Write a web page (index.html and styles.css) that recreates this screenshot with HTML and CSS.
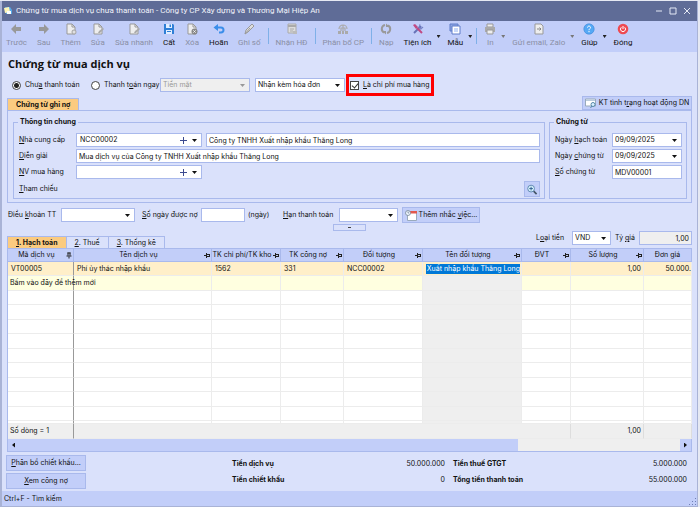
FILE: index.html
```
<!DOCTYPE html>
<html lang="vi">
<head>
<meta charset="UTF-8">
<meta name="viewport" content="width=device-width, initial-scale=1.0">
<title>Chứng từ mua dịch vụ</title>
<link rel="stylesheet" href="styles.css">
</head>
<body>
<div class="window">

<header class="titlebar">
  <svg class="app-icon" viewBox="0 0 8 8"><path d="M1 0h5l2 3v4H2z" fill="#58a9e8"/><path d="M0 1l5-1 1 5-5 1z" fill="#fff6b8"/><path d="M3 4h4v3H3z" fill="#fff"/></svg>
  <span class="caption">Chứng từ mua dịch vụ chưa thanh toán - Công ty CP Xây dựng và Thương Mại Hiệp An</span>
  <button class="win-btn" aria-label="Thu nhỏ"><svg viewBox="0 0 8 8"><path d="M1 4h6"/></svg></button>
  <button class="win-btn" aria-label="Phóng to"><svg viewBox="0 0 8 8"><path d="M1 1h6v6H1z"/></svg></button>
  <button class="win-btn" aria-label="Đóng cửa sổ"><svg viewBox="0 0 8 8"><path d="M1 1l6 6M7 1l-6 6"/></svg></button>
</header>

<nav class="toolbar">
  <button class="tool" disabled><svg viewBox="0 0 12 12"><path d="M6 1v3h5v4H6v3L1 6z" fill="#999"/></svg>Trước</button>
  <button class="tool" disabled><svg viewBox="0 0 12 12"><path d="M6 1v3H1v4h5v3l5-5z" fill="#999"/></svg>Sau</button>
  <button class="tool" disabled><svg viewBox="0 0 12 12"><path d="M2 1h5l3 3v7H2z" fill="#eee" stroke="#999"/><path d="M7 1v3h3" fill="none" stroke="#999"/><circle cx="9" cy="9" r="2.500" fill="#aaa"/><path d="M9 7.500v3M7.500 9h3" stroke="#fff" stroke-width=".8"/></svg>Thêm</button>
  <button class="tool" disabled><svg viewBox="0 0 12 12"><path d="M2 1h5l3 3v7H2z" fill="#eee" stroke="#999"/><path d="M7 1v3h3" fill="none" stroke="#999"/><path d="M6 10l1-2 4-3 1 1-4 4z" fill="#aaa"/></svg>Sửa</button>
  <button class="tool" disabled><svg viewBox="0 0 12 12"><path d="M2 1h5l3 3v7H2z" fill="#eee" stroke="#999"/><path d="M7 1v3h3" fill="none" stroke="#999"/><path d="M6 10l1-2 4-3 1 1-4 4z" fill="#aaa"/></svg>Sửa nhanh</button>
  <button class="tool"><svg viewBox="0 0 12 12"><path d="M1 1h9l1 1v9H1z" fill="#2f7fd6"/><path d="M3 1h6v4H3zM3 7h6v4H3z" fill="#e3efff"/><path d="M6.500 1.500h1.500v2.500H6.500zM4 8h4v1H4z" fill="#2f7fd6"/></svg>Cất</button>
  <button class="tool" disabled><svg viewBox="0 0 12 12"><path d="M2 1h5l3 3v7H2z" fill="#eee" stroke="#999"/><path d="M7 1v3h3" fill="none" stroke="#999"/><circle cx="8.500" cy="8.500" r="3" fill="#888"/><path d="M7.300 7.300l2.400 2.400M9.700 7.300L7.300 9.700" stroke="#fff" stroke-width=".8"/></svg>Xóa</button>
  <button class="tool"><svg viewBox="0 0 12 12"><path d="M2 4.500h6a2.500 2.500 0 0 1 0 5H6" fill="none" stroke="#3b8eea" stroke-width="2"/><path d="M5 1v7L.5 4.500z" fill="#3b8eea"/></svg>Hoãn</button>
  <button class="tool" disabled><svg viewBox="0 0 12 12"><path d="M2 11l1-4 6-6 2 2-6 6z" fill="#ddd" stroke="#999"/><path d="M2 11l5-6" stroke="#999"/></svg>Ghi số</button>
  <span class="sep"></span>
  <button class="tool" disabled><svg viewBox="0 0 12 12"><path d="M2 1h8v9H2z" fill="#ddd" stroke="#aaa"/><path d="M2 2h8v2H2z" fill="#aaa"/><path d="M4 6h4M4 8h3" stroke="#aaa"/><path d="M7 8h4v3H7z" fill="#bbb"/></svg>Nhận HĐ</button>
  <span class="sep"></span>
  <button class="tool" disabled><svg viewBox="0 0 12 12"><path d="M2 6a4 4 0 0 1 8 0M4 8V5h4v3M6 2v8" fill="none" stroke="#aaa" stroke-width="1.200"/><path d="M1 8h3v3H1zM5 8h2v3H5zM8 8h3v3H8z" fill="#aaa"/></svg>Phân bổ CP</button>
  <span class="sep"></span>
  <button class="tool" disabled><svg viewBox="0 0 12 12"><path d="M5 2a4 4 0 0 0-1 7.500M7 10A4 4 0 0 0 8 2.500" fill="none" stroke="#999" stroke-width="2"/><path d="M2 8h4v3.500zM10 4H6V.5z" fill="#999"/></svg>Nạp</button>
  <button class="tool"><svg viewBox="0 0 12 12"><path d="M2 10l7-7" stroke="#6672b8" stroke-width="2"/><path d="M8 1l-1 3 2 1 2-1a3 3 0 0 1-4 2" fill="#8791cf" stroke="#6672b8" stroke-width=".6"/><path d="M1 2l2-1 3 3-2 2z" fill="#c04a84"/><path d="M5 5l5 5" stroke="#c04a84" stroke-width="2"/></svg>Tiện ích</button>
  <span class="drop"></span>
  <button class="tool"><svg viewBox="0 0 12 12"><path d="M1 1h8v7H1z" fill="#8ea6e2" stroke="#5f7cc9"/><path d="M3 3h8v8H3z" fill="#fff" stroke="#5f7cc9"/><path d="M5 5h4v4H5z" fill="#c8d8f8"/></svg>Mẫu</button>
  <span class="drop"></span>
  <span class="sep"></span>
  <button class="tool" disabled><svg viewBox="0 0 12 12"><path d="M3 1h6v3H3z" fill="#eee" stroke="#999"/><path d="M1 4h10v5H1z" fill="#aaa"/><path d="M3 7h6v4H3z" fill="#eee" stroke="#999"/></svg>In</button>
  <span class="drop off"></span>
  <button class="tool" disabled><svg viewBox="0 0 12 12"><path d="M2 1h6l2 2v8H2z" fill="#eee" stroke="#999"/><path d="M4 6h4M6.500 4.500L8 6 6.500 7.500" fill="none" stroke="#888"/></svg>Gửi email, Zalo</button>
  <span class="drop off"></span>
  <button class="tool"><svg viewBox="0 0 12 12"><circle cx="6" cy="6" r="5.200" fill="#56a9f5" stroke="#3987d8" stroke-width=".6"/><path d="M4.500 4.600c0-2 3-2 3 0 0 1.200-1.500 1-1.500 2.600M6 8v1.200" fill="none" stroke="#fff"/></svg>Giúp</button>
  <span class="drop"></span>
  <button class="tool"><svg viewBox="0 0 12 12"><circle cx="6" cy="6" r="5.300" fill="#ee4a52"/><path d="M4.300 4.300a2.500 2.500 0 1 0 3.400 0M6 3v3" fill="none" stroke="#fff"/></svg>Đóng</button>
</nav>

<main class="content">
  <h1>Chứng từ mua dịch vụ</h1>

  <div class="options">
    <label class="choice unpaid"><input type="radio" name="pay" checked><span>Chư<u>a</u> thanh toán</span></label>
    <label class="choice paid"><input type="radio" name="pay"><span>Thanh t<u>o</u>án ngay</span></label>
    <div class="combo off"><select aria-label="Hình thức thanh toán" disabled><option>Tiền mặt</option></select></div>
    <div class="combo"><select aria-label="Hóa đơn"><option>Nhận kèm hóa đơn</option></select></div>
    <label class="choice cost"><input type="checkbox" checked><span><u>L</u>à chi phí mua hàng</span></label>
  </div>

  <div class="panel-head">
    <button class="tab active">Chứng từ ghi nợ</button>
    <button class="btn check-btn"><svg viewBox="0 0 12 10"><path d="M.5.5h10v7H.5z" fill="#fff" stroke="#9ab"/><path d="M1 1h9v1.500H1z" fill="#bcd"/><circle cx="8" cy="6" r="2" fill="#d8f0ff" stroke="#58a"/><path d="M7 7.500L5.500 9.500" stroke="#58a"/></svg><span>KT tình t<u>r</u>ạng hoạt động DN</span></button>
  </div>

  <div class="panel">
    <fieldset class="general">
      <legend>Thông tin chung</legend>
      <label for="supplier"><u>N</u>hà cung cấp</label>
      <div class="field-row">
        <div class="combo"><input id="supplier" type="text" value="NCC00002"><button class="plus" aria-label="Thêm nhà cung cấp"></button></div>
        <input class="box" type="text" aria-label="Tên nhà cung cấp" value="Công ty TNHH Xuất nhập khẩu Thăng Long">
      </div>
      <label for="note"><u>D</u>iễn giải</label>
      <input class="box" id="note" type="text" value="Mua dịch vụ của Công ty TNHH Xuất nhập khẩu Thăng Long">
      <label for="staff"><u>N</u>V mua hàng</label>
      <div class="field-row">
        <div class="combo"><input id="staff" type="text"><button class="plus" aria-label="Thêm nhân viên"></button></div>
      </div>
      <span class="ref-label"><u>T</u>ham chiếu</span>
      <button class="btn lookup" aria-label="Chọn chứng từ tham chiếu"><svg viewBox="0 0 12 12"><path d="M7.500 7.500L11 11" stroke="#456" stroke-width="1.800"/><circle cx="5" cy="5" r="3.700" fill="#d5f1fc" stroke="#5b83ad"/><path d="M3 5h4M5 3v4" stroke="#2c5b8c"/></svg></button>
    </fieldset>

    <fieldset class="voucher">
      <legend>Chứng từ</legend>
      <label for="post-date">Ngày <u>h</u>ạch toán</label>
      <div class="combo"><input id="post-date" type="text" value="09/09/2025"></div>
      <label for="doc-date">Ngày <u>c</u>hứng từ</label>
      <div class="combo"><input id="doc-date" type="text" value="09/09/2025"></div>
      <label for="doc-no"><u>S</u>ố chứng từ</label>
      <input class="box" id="doc-no" type="text" value="MDV00001">
    </fieldset>
  </div>

  <div class="terms">
    <label for="term">Điều <u>k</u>hoản TT</label>
    <div class="combo term"><select id="term"><option></option></select></div>
    <label for="days"><u>S</u>ố ngày được nợ</label>
    <input class="box days" id="days" type="text">
    <span class="unit">(ngày)</span>
    <label for="due"><u>H</u>ạn thanh toán</label>
    <div class="combo due"><input id="due" type="text"></div>
    <button class="btn remind"><svg viewBox="0 0 12 11"><path d="M2.500 1.500h9v9h-9z" fill="#fff" stroke="#9ab"/><path d="M5 1h7v2.500H5z" fill="#e2584e"/><circle cx="3" cy="3" r="2.500" fill="#eef6ff" stroke="#789" stroke-width=".8"/><path d="M3 1.500V3h1" fill="none" stroke="#567" stroke-width=".6"/></svg><span>Thêm nhắc <u>v</u>iệc...</span></button>
  </div>
  <button class="splitter" aria-label="Thu gọn"></button>

  <div class="grid-head">
    <div class="tabs">
      <button class="tab active"><u>1</u>. Hạch toán</button>
      <button class="tab"><u>2</u>. Thuế</button>
      <button class="tab"><u>3</u>. Thống kê</button>
    </div>
    <div class="currency">
      <label for="cur">L<u>o</u>ại tiền</label>
      <div class="combo"><select id="cur"><option>VND</option></select></div>
      <label for="rate">Tỷ <u>g</u>iá</label>
      <input class="box" id="rate" type="text" value="1,00" readonly>
    </div>
  </div>

  <div class="grid">
    <table>
      <colgroup><col class="w-code"><col class="w-name"><col class="w-acc"><col class="w-debt"><col class="w-obj"><col class="w-objname"><col class="w-unit"><col class="w-qty"><col class="w-price"></colgroup>
      <thead>
        <tr><th class="pinned">Mã dịch vụ</th><th>Tên dịch vụ</th><th>TK chi phí/TK kho</th><th>TK công nợ</th><th>Đối tượng</th><th>Tên đối tượng</th><th>ĐVT</th><th>Số lượng</th><th class="last">Đơn giá</th></tr>
      </thead>
      <tbody>
        <tr class="current"><td>VT00005</td><td>Phí ủy thác nhập khẩu</td><td>1562</td><td>331</td><td>NCC00002</td><td class="editing"><div><span>Công ty TNHH Xuất nhập khẩu Thăng Long</span></div></td><td></td><td class="num">1,00</td><td class="cut">50.000.</td></tr>
        <tr class="new"><td class="hint">Bấm vào đây để thêm mới</td><td></td><td></td><td></td><td></td><td></td><td></td><td></td><td></td></tr>
        <tr><td></td><td></td><td></td><td></td><td></td><td></td><td></td><td></td><td></td></tr>
        <tr><td></td><td></td><td></td><td></td><td></td><td></td><td></td><td></td><td></td></tr>
        <tr><td></td><td></td><td></td><td></td><td></td><td></td><td></td><td></td><td></td></tr>
        <tr><td></td><td></td><td></td><td></td><td></td><td></td><td></td><td></td><td></td></tr>
        <tr><td></td><td></td><td></td><td></td><td></td><td></td><td></td><td></td><td></td></tr>
        <tr><td></td><td></td><td></td><td></td><td></td><td></td><td></td><td></td><td></td></tr>
        <tr><td></td><td></td><td></td><td></td><td></td><td></td><td></td><td></td><td></td></tr>
        <tr><td></td><td></td><td></td><td></td><td></td><td></td><td></td><td></td><td></td></tr>
        <tr><td></td><td></td><td></td><td></td><td></td><td></td><td></td><td></td><td></td></tr>
        <tr class="rest"><td></td><td></td><td></td><td></td><td></td><td></td><td></td><td></td><td></td></tr>
      </tbody>
      <tfoot>
        <tr><td class="hint">Số dòng = 1</td><td colspan="6"></td><td class="num">1,00</td><td></td></tr>
      </tfoot>
    </table>
    <div class="scrollbar"><button class="arrow left" aria-label="Cuộn trái"></button><span class="thumb"></span><button class="arrow right" aria-label="Cuộn phải"></button></div>
  </div>

  <div class="summary">
    <div class="actions">
      <button class="btn"><span><u>P</u>hân bổ chiết khấu...</span></button>
      <button class="btn"><span><u>X</u>em công nợ</span></button>
    </div>
    <dl>
      <dt>Tiền dịch vụ</dt><dd>50.000.000</dd>
      <dt>Tiền thuế GTGT</dt><dd>5.000.000</dd>
      <dt>Tiền chiết khấu</dt><dd>0</dd>
      <dt>Tổng tiền thanh toán</dt><dd>55.000.000</dd>
    </dl>
  </div>
</main>

<footer class="statusbar">Ctrl+F - Tìm kiếm<svg class="grip" viewBox="0 0 8 8"><path d="M6 0h1v1H6zM6 3h1v1H6zM6 6h1v1H6zM3 3h1v1H3zM3 6h1v1H3zM0 6h1v1H0z" fill="#6f7fb5"/></svg></footer>

</div>
</body>
</html>
```
FILE: styles.css
```
:root {
  --bg: #dae1fb;
  --bar: #c2cef9;
  --line: #a9b9ec;
  --chrome: Roboto, "Liberation Sans", sans-serif;
  --head: "Open Sans", "Noto Sans", sans-serif;
}
* { box-sizing: border-box; }
body { margin: 0; background: #e6e9f3; color: #111; font: 7px/12px Inter, "Liberation Sans", Arial, sans-serif; }
button, input, select { font: inherit; color: inherit; margin: 0; padding: 0; border: 0; background: none; border-radius: 0; }
svg { display: block; flex: none; }
u { text-decoration-thickness: 1px; text-underline-offset: 1px; }
label { white-space: nowrap; }

.window { display: flex; flex-direction: column; margin: 1px 2px 1px 0; background: var(--bg); border: solid #a9b3d6; border-width: 0 1px 1px 2px; min-height: calc(100vh - 2px); }

.titlebar { display: flex; align-items: center; height: 20px; padding: 0 3px 0 2px; background: #5f6c97; color: #f2f4fb; font: 8px/12px var(--chrome); }
.app-icon { width: 8px; height: 8px; margin-right: 4px; }
.caption { flex: 1; }
.win-btn { width: 14px; height: 12px; padding: 2px 3px; }
.win-btn svg { width: 8px; height: 8px; fill: none; stroke: #e4e8f5; }

.toolbar { display: flex; gap: 10px; height: 31px; padding: 2px 4px 0; background: var(--bar); font: 8px/12px var(--chrome); }
.tool { display: flex; flex-direction: column; align-items: center; gap: 2px; white-space: nowrap; }
.tool:disabled { color: #8a8fa5; }
.tool svg { width: 12px; height: 12px; }
.sep { width: 1px; height: 16px; margin: 5px -3px 0; background: #7fb0e8; }
.drop { margin: 12px -3px 0 -5px; width: 4px; height: 3px; background: #222; clip-path: polygon(0 0, 100% 0, 50% 100%); }
.drop.off { background: #777; }

.content { flex: 1; padding: 0 5px; }
h1 { margin: 3px 1px 0; font: bold 11px/18px var(--head); color: #111; }

.options { display: flex; align-items: center; height: 22px; margin-top: 1px; padding-left: 5px; }
.choice { display: flex; align-items: center; gap: 4px; }
.choice input { appearance: none; flex: none; width: 9px; height: 9px; border: 1px solid #444; background: #fff; }
.choice input[type=radio] { border-radius: 50%; }
.choice input[type=radio]:checked { background: radial-gradient(#222 0 2px, #fff 3px); }
.unpaid { width: 79px; }
.paid { width: 69px; }
.options .combo { width: 90px; margin-right: 5px; }
.cost { width: 88px; height: 22px; padding-left: 1px; margin-left: -4px; border: 3px solid #f00; }
.cost input::before { content: ""; display: block; width: 3px; height: 5px; margin: 0 auto; border: solid #333; border-width: 0 1px 1px 0; transform: rotate(40deg); }

.combo { position: relative; display: flex; height: 14px; border: 1px solid var(--line); background: #fff; }
.combo::after { content: ""; position: absolute; right: 4px; top: 5px; width: 5px; height: 3px; background: #111; clip-path: polygon(0 0, 100% 0, 50% 100%); pointer-events: none; }
.combo.off { background: #efefef; color: #999; }
.combo.off::after { background: #999; }
.combo select, .combo input { appearance: none; flex: 1; min-width: 0; padding: 0 2px; opacity: 1; }
.box { width: 100%; height: 14px; min-width: 0; padding: 0 2px; border: 1px solid var(--line); background: #fff; }
.plus { width: 7px; height: 7px; margin: 3px 14px 0 0; background: linear-gradient(#3b4a8f, #3b4a8f) 3px 0 / 1px 7px no-repeat, linear-gradient(#3b4a8f, #3b4a8f) 0 3px / 7px 1px no-repeat; }

.btn { display: flex; align-items: center; justify-content: center; gap: 2px; height: 16px; border: 1px solid var(--line); background: var(--bar); white-space: nowrap; }
.btn svg { width: 12px; height: 11px; }

.panel-head { display: flex; justify-content: space-between; align-items: flex-end; }
.tab { height: 12px; line-height: 11px; padding: 0 8px; border: 1px solid var(--line); border-bottom: 0; }
.tab.active { background: #fbcb80; font-weight: bold; }
.check-btn { width: 110px; height: 14px; }

.panel { display: flex; gap: 4px; padding: 5px 4px 3px 5px; border: 1px solid var(--line); }
fieldset { margin: 0; padding: 5px 4px 1px 5px; border: 1px solid var(--line); display: grid; gap: 2px 0; align-items: center; min-width: 0; grid-template-columns: 57px minmax(0, 1fr); }
legend { padding: 0 2px; margin-left: -1px; font-weight: bold; line-height: 12px; }
.general { flex: 1; }
.general .combo { width: 126px; }
.general .combo input { padding-left: 3px; }
.field-row { display: flex; gap: 4px; }
.field-row .box { flex: 1; }
.lookup { justify-self: end; width: 16px; }
.voucher { width: 138px; align-content: start; }

.terms { display: flex; align-items: center; height: 16px; margin-top: 4px; padding-left: 1px; }
.terms label:first-child { width: 53px; }
.term { width: 74px; margin-right: 7px; }
.terms label[for=days] { width: 59px; }
.days { width: 44px; margin-right: 3px; }
.unit { width: 35px; }
.terms label[for=due] { width: 56px; }
.due { width: 59px; margin-right: 4px; }
.remind { width: 78px; }
.splitter { display: block; width: 33px; height: 7px; margin: 1px auto 0; border: 1px solid var(--line); background: linear-gradient(#444, #444) center / 3px 1px no-repeat; }

.grid-head { display: flex; justify-content: space-between; align-items: flex-end; height: 17px; }
.tabs { display: flex; }
.tabs .tab + .tab { border-left: 0; }
.currency { display: flex; align-items: center; gap: 4px; padding-bottom: 3px; }
.currency .combo { width: 39px; margin-left: 4px; }
.currency .box { width: 53px; background: #efefef; text-align: right; }

.grid { border: 1px solid var(--line); border-top: 0; }
table { width: 100%; table-layout: fixed; border-collapse: separate; border-spacing: 0; background: #fff; }
.w-code { width: 66px; }
.w-name { width: 138px; }
.w-acc { width: 69px; }
.w-debt { width: 63px; }
.w-obj { width: 79px; }
.w-objname { width: 99px; }
.w-unit { width: 49px; }
.w-qty { width: 73px; }
.w-price { width: 48px; }
th { position: relative; height: 14px; padding: 0 8px 0 0; font-weight: normal; background: var(--bar); border: solid var(--line); border-width: 1px 1px 1px 0; white-space: nowrap; }
th::after { content: ""; position: absolute; right: 1px; top: 4px; width: 6px; height: 5px; background: linear-gradient(#222, #222) 0 2px / 2px 1px no-repeat, linear-gradient(#222, #222) 2px 0 / 1px 5px no-repeat, linear-gradient(#222, #222) 3px 1px / 3px 1px no-repeat, linear-gradient(#222, #222) 3px 3px / 3px 1px no-repeat, linear-gradient(#222, #222) 5px 1px / 1px 3px no-repeat; }
th.pinned::after { transform: rotate(-90deg); }
th.last { padding: 0; }
th.last::after { display: none; }
td { height: 14px; padding: 0 3px; border: solid #ececec; border-width: 0 1px 1px 0; white-space: nowrap; overflow: hidden; }
tr:nth-child(even) td { height: 15px; }
td:first-child { border-right-color: #999; }
td:nth-child(6) { background: #efefef; }
.current td, .current td:nth-child(6) { background: #ffefc9; }
.new td { background: #ffffe0; }
.new td:nth-child(6) { background: #efefef; }
td.hint { padding-left: 2px; overflow: visible; }
.new td.hint { position: relative; z-index: 1; }
.num { text-align: right; padding-right: 2px; }
.cut { padding: 0; text-align: right; }
.editing div { display: flex; justify-content: flex-end; overflow: hidden; }
.editing span { background: #0078d7; color: #fff; line-height: 10px; }
td.editing { padding: 0 1px 0 3px; }
tbody .rest td { height: 3px; }
tfoot td, tfoot tr td:nth-child(2) { height: 15px; background: #efefef; border-right-color: #ddd; }

.scrollbar { display: flex; height: 12px; background: #efefef; }
.arrow { width: 11px; background: var(--bar); }
.arrow::before { content: ""; display: block; width: 3px; height: 5px; margin: 0 auto; background: #111; clip-path: polygon(0 50%, 100% 0, 100% 100%); }
.arrow.right { margin-left: auto; }
.arrow.right::before { clip-path: polygon(0 0, 100% 50%, 0 100%); }
.thumb { width: 73%; background: var(--bar); }

.summary { display: flex; gap: 146px; padding: 3px 5px 2px 0; }
.actions { display: flex; flex-direction: column; gap: 2px; width: 80px; margin-left: -1px; }
.summary dl { flex: 1; display: grid; grid-template-columns: 90px 115fr 100px 126fr; column-gap: 8px; row-gap: 4px; align-content: center; margin: 0; }
dt { font-weight: bold; }
dd { margin: 0; text-align: right; }

.statusbar { display: flex; justify-content: space-between; align-items: center; height: 15px; padding: 0 0 0 2px; background: var(--bar); }
.grip { width: 8px; height: 8px; align-self: flex-end; }
```
